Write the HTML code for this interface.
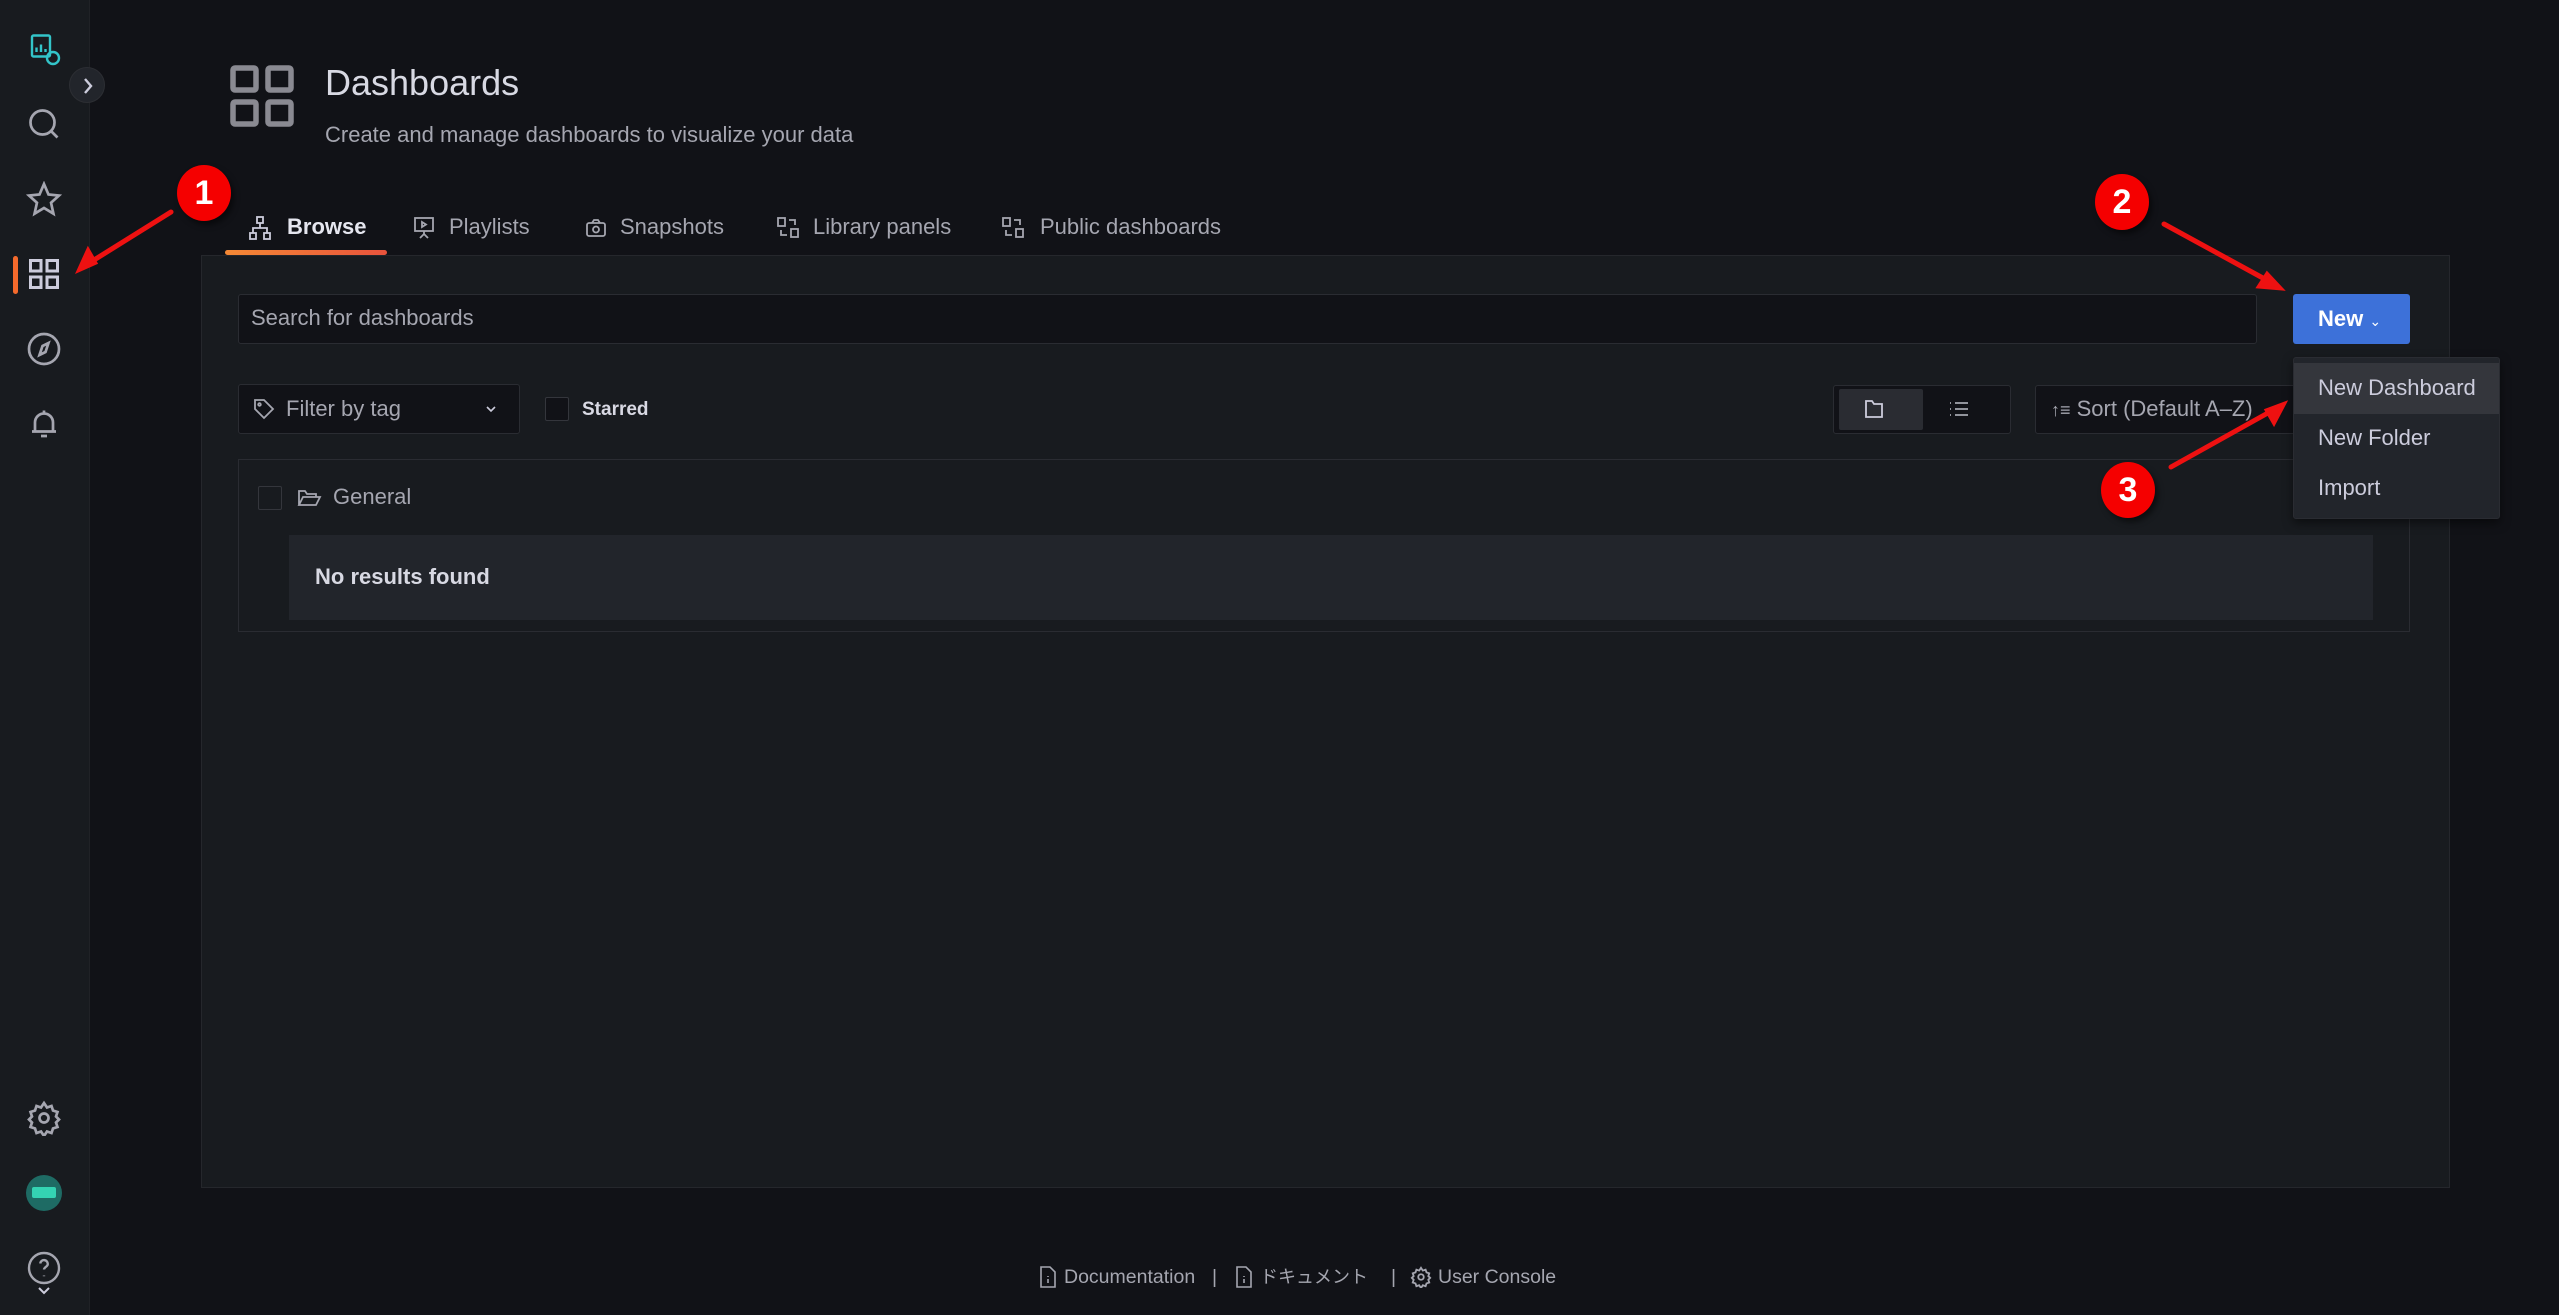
<!DOCTYPE html>
<html><head><meta charset="utf-8"><style>
*{box-sizing:border-box;margin:0;padding:0}
body{width:2559px;height:1315px;background:#111217;font-family:"Liberation Sans","Noto Sans CJK JP",sans-serif;color:#ccccdc;position:relative;overflow:hidden}
.a{position:absolute}
.side{left:0;top:0;width:90px;height:1315px;background:#181b1f;border-right:1px solid #202226}
.ic{position:absolute;left:26px;width:36px;height:36px}
svg{display:block}
.tab{position:absolute;top:212px;font-size:22px;color:#a5a6b0;line-height:30px}
.tabi{position:absolute;top:215px}
.panel{left:201px;top:255px;width:2249px;height:933px;background:#181b1f;border:1px solid #25272c}
.inp{background:#111217;border:1px solid #2a2c32;border-radius:3px}
.badge{width:54px;height:56px;border-radius:50%;background:#f50000;color:#fff;font-weight:bold;font-size:34px;text-align:center;line-height:56px;box-shadow:3px 4px 6px rgba(0,0,0,.5)}
.mi{position:absolute;left:24px;font-size:22px;color:#ccccdc}
.ft{position:absolute;top:0;line-height:24px}
</style></head><body>
<div class="a side">
 <svg class="ic" style="top:31px" viewBox="0 0 24 24" fill="none" stroke="#33c5c9" stroke-width="1.6"><rect x="4" y="3" width="12" height="14" rx="1"/><path d="M7 14v-3M10 14v-5M13 14v-2"/><circle cx="18" cy="18" r="4"/></svg>
 <svg class="ic" style="top:106px" viewBox="0 0 24 24" fill="none" stroke="#a5a6b0" stroke-width="1.8"><circle cx="11" cy="11" r="8"/><path d="M17 17l4 4"/></svg>
 <svg class="ic" style="top:181px" viewBox="0 0 24 24" fill="none" stroke="#a5a6b0" stroke-width="1.8"><path d="M12 2l3 7 7 .7-5.3 4.8 1.6 7.3L12 18l-6.3 3.8 1.6-7.3L2 9.7 9 9z"/></svg>
 <div class="a" style="left:13px;top:256px;width:5px;height:38px;background:#f46a2c;border-radius:3px"></div>
 <svg class="ic" style="top:256px" viewBox="0 0 24 24" fill="none" stroke="#ccccdc" stroke-width="2"><rect x="3" y="3" width="7" height="7"/><rect x="14" y="3" width="7" height="7"/><rect x="3" y="14" width="7" height="7"/><rect x="14" y="14" width="7" height="7"/></svg>
 <svg class="ic" style="top:331px" viewBox="0 0 24 24" fill="none" stroke="#a5a6b0" stroke-width="1.8"><circle cx="12" cy="12" r="10"/><path d="M15 8l-2 6-4 2 2-6z"/></svg>
 <svg class="ic" style="top:406px" viewBox="0 0 24 24" fill="none" stroke="#a5a6b0" stroke-width="1.8"><path d="M6 17V11a6 6 0 0112 0v6zM4 17h16M10 20h4M12 3v2"/></svg>
 <svg class="ic" style="top:1100px" viewBox="0 0 24 24" fill="none" stroke="#a5a6b0" stroke-width="1.8"><circle cx="12" cy="12" r="3"/><path d="M12 2l2 3 3-1 1 3 3 1-1 3 2 2-2 2 1 3-3 1-1 3-3-1-2 3-2-3-3 1-1-3-3-1 1-3-2-2 2-2-1-3 3-1 1-3 3 1z"/></svg>
 <div class="a" style="left:26px;top:1175px;width:36px;height:36px;border-radius:50%;background:#1e6b64"><div class="a" style="left:6px;top:12px;width:24px;height:11px;background:#34d3b3;border-radius:2px"></div></div>
 <svg class="ic" style="top:1250px" viewBox="0 0 24 24" fill="none" stroke="#a5a6b0" stroke-width="1.6"><circle cx="12" cy="12" r="10"/><path d="M9.5 9a2.5 2.5 0 115 .5c0 1.5-2.5 2-2.5 3.5M12 17v.5"/></svg>
 <svg class="a" style="left:36px;top:1285px" width="16" height="12" viewBox="0 0 16 12" fill="none" stroke="#ccccdc" stroke-width="2"><path d="M3 3l5 5 5-5"/></svg>
</div>
<div class="a" style="left:69px;top:67px;width:36px;height:36px;border-radius:50%;background:#22252b;border:1px solid #2c2e33"><svg class="a" style="left:11px;top:9px" width="14" height="18" viewBox="0 0 14 18" fill="none" stroke="#ccccdc" stroke-width="2.4"><path d="M4 2l6 7-6 7"/></svg></div>

<svg class="a" style="left:230px;top:65px" width="64" height="62" viewBox="0 0 64 62" fill="none" stroke="#8a8a92" stroke-width="5.5"><rect x="3" y="3" width="23" height="22" rx="2"/><rect x="38" y="3" width="23" height="22" rx="2"/><rect x="3" y="37" width="23" height="22" rx="2"/><rect x="38" y="37" width="23" height="22" rx="2"/></svg>
<div class="a" style="left:325px;top:62px;font-size:36px;color:#d8d9e3">Dashboards</div>
<div class="a" style="left:325px;top:122px;font-size:22px;color:#a5a6b0">Create and manage dashboards to visualize your data</div>

<svg class="tabi" style="left:248px" width="24" height="26" viewBox="0 0 24 26" fill="none" stroke="#ccccdc" stroke-width="1.8"><rect x="9" y="2" width="6" height="6"/><rect x="2" y="18" width="6" height="6"/><rect x="16" y="18" width="6" height="6"/><path d="M12 8v5M5 18v-5h14v5"/></svg>
<div class="tab" style="left:287px;color:#e5e6ef;font-weight:bold">Browse</div>
<div class="a" style="left:225px;top:250px;width:162px;height:5px;background:linear-gradient(90deg,#f58935,#e8533c);border-radius:3px"></div>
<svg class="tabi" style="left:412px" width="24" height="26" viewBox="0 0 24 26" fill="none" stroke="#a5a6b0" stroke-width="1.8"><rect x="3" y="3" width="18" height="13"/><path d="M10 7v5l4-2.5zM12 16v4M8 23l4-4 4 4"/></svg>
<div class="tab" style="left:449px">Playlists</div>
<svg class="tabi" style="left:584px" width="24" height="26" viewBox="0 0 24 26" fill="none" stroke="#a5a6b0" stroke-width="1.8"><rect x="3" y="8" width="18" height="13" rx="2"/><path d="M8 8l2-3h4l2 3"/><circle cx="12" cy="14.5" r="3"/></svg>
<div class="tab" style="left:620px">Snapshots</div>
<svg class="tabi" style="left:776px" width="24" height="26" viewBox="0 0 24 26" fill="none" stroke="#a5a6b0" stroke-width="1.8"><rect x="2" y="3" width="7" height="8"/><rect x="15" y="14" width="7" height="8"/><path d="M13 5h6v5M11 20H5v-5"/></svg>
<div class="tab" style="left:813px">Library panels</div>
<svg class="tabi" style="left:1001px" width="24" height="26" viewBox="0 0 24 26" fill="none" stroke="#a5a6b0" stroke-width="1.8"><rect x="2" y="3" width="7" height="8"/><rect x="15" y="14" width="7" height="8"/><path d="M13 5h6v5M11 20H5v-5"/></svg>
<div class="tab" style="left:1040px">Public dashboards</div>

<div class="a panel"></div>
<div class="a inp" style="left:238px;top:294px;width:2019px;height:50px"></div>
<div class="a" style="left:251px;top:305px;font-size:22px;color:#a5a6b0">Search for dashboards</div>
<div class="a" style="left:2293px;top:294px;width:117px;height:50px;background:#3d71d9;border-radius:3px;color:#fff;font-weight:bold;font-size:22px;line-height:50px;padding-left:25px">New <span style="font-size:14px;font-weight:normal">&#8964;</span></div>

<div class="a inp" style="left:238px;top:384px;width:282px;height:50px"></div>
<svg class="a" style="left:252px;top:397px" width="24" height="24" viewBox="0 0 24 24" fill="none" stroke="#a5a6b0" stroke-width="1.8"><path d="M3 3h9l9 9-9 9-9-9z"/><circle cx="7.5" cy="7.5" r="1.3"/></svg>
<div class="a" style="left:286px;top:396px;font-size:22px;color:#a5a6b0">Filter by tag</div>
<svg class="a" style="left:485px;top:404px" width="12" height="10" viewBox="0 0 12 10" fill="none" stroke="#ccccdc" stroke-width="1.6"><path d="M2 3l4 4 4-4"/></svg>
<div class="a inp" style="left:545px;top:397px;width:24px;height:24px;border-radius:2px;border-color:#34363c"></div>
<div class="a" style="left:582px;top:399px;font-size:19px;font-weight:bold;color:#d8d9e3">Starred</div>

<div class="a inp" style="left:1833px;top:385px;width:178px;height:49px"></div>
<div class="a" style="left:1839px;top:389px;width:84px;height:41px;background:#2a2c32;border-radius:2px"></div>
<svg class="a" style="left:1862px;top:397px" width="24" height="24" viewBox="0 0 24 24" fill="none" stroke="#ccccdc" stroke-width="1.8"><path d="M4 4h6l2 3h8v13H4z"/></svg>
<svg class="a" style="left:1948px;top:399px" width="22" height="20" viewBox="0 0 22 20" fill="none" stroke="#a5a6b0" stroke-width="1.8"><path d="M2 4h1M7 4h13M2 10h1M7 10h13M2 16h1M7 16h13"/></svg>
<div class="a inp" style="left:2035px;top:385px;width:270px;height:49px"></div>
<div class="a" style="left:2051px;top:396px;font-size:22px;color:#a5a6b0"><span style="font-size:18px">↑≡</span> Sort (Default A–Z)</div>

<div class="a" style="left:238px;top:459px;width:2172px;height:173px;border:1px solid #2a2c32"></div>
<div class="a inp" style="left:258px;top:486px;width:24px;height:24px;border-radius:2px;border-color:#34363c;background:#181b1f"></div>
<svg class="a" style="left:296px;top:486px" width="26" height="24" viewBox="0 0 26 24" fill="none" stroke="#a5a6b0" stroke-width="1.8"><path d="M3 19V5h6l2 3h9v3M3 19l4-8h17l-4 8z"/></svg>
<div class="a" style="left:333px;top:484px;font-size:22px;color:#a5a6b0">General</div>
<div class="a" style="left:289px;top:535px;width:2084px;height:85px;background:#22252b"></div>
<div class="a" style="left:315px;top:564px;font-size:22px;font-weight:bold;color:#d8d9e3">No results found</div>

<div class="a" style="left:2293px;top:357px;width:207px;height:162px;background:#22252b;border-radius:3px;box-shadow:0 4px 10px rgba(0,0,0,.5);border:1px solid #2a2c32">
 <div class="a" style="left:0;top:5px;width:205px;height:51px;background:#34363c"></div>
 <div class="mi" style="top:17px">New Dashboard</div>
 <div class="mi" style="top:67px">New Folder</div>
 <div class="mi" style="top:117px">Import</div>
</div>

<div class="a" style="left:0;top:1265px;width:2559px;font-size:19.5px;color:#a5a6b0">
 <svg class="a" style="left:1038px;top:0" width="20" height="24" viewBox="0 0 20 24" fill="none" stroke="#a5a6b0" stroke-width="1.6"><path d="M3 2h9l5 5v15H3zM10 11v1M10 14v4"/></svg>
 <div class="ft" style="left:1064px">Documentation</div>
 <div class="ft" style="left:1212px">|</div>
 <svg class="a" style="left:1234px;top:0" width="20" height="24" viewBox="0 0 20 24" fill="none" stroke="#a5a6b0" stroke-width="1.6"><path d="M3 2h9l5 5v15H3zM10 11v1M10 14v4"/></svg>
 <div class="ft" style="left:1260px;font-size:18px">ドキュメント</div>
 <div class="ft" style="left:1391px">|</div>
 <svg class="a" style="left:1410px;top:1px" width="22" height="22" viewBox="0 0 24 24" fill="none" stroke="#a5a6b0" stroke-width="2"><circle cx="12" cy="12" r="3"/><path d="M12 2l2 3 3-1 1 3 3 1-1 3 2 2-2 2 1 3-3 1-1 3-3-1-2 3-2-3-3 1-1-3-3-1 1-3-2-2 2-2-1-3 3-1 1-3 3 1z"/></svg>
 <div class="ft" style="left:1438px">User Console</div>
</div>

<svg class="a" style="left:0;top:0" width="2559" height="1315" fill="none" stroke="#ee1111" stroke-width="5" stroke-linecap="round">
 <path d="M171 212L86 265"/><path d="M78 271l10-22 8 14z" fill="#ee1111" stroke-width="3"/>
 <path d="M2164 224L2272 283"/><path d="M2282 289l-24-2 9-14z" fill="#ee1111" stroke-width="3"/>
 <path d="M2171 467L2275 409"/><path d="M2285 403l-11 21-8-14z" fill="#ee1111" stroke-width="3"/>
</svg>
<div class="a badge" style="left:177px;top:165px">1</div>
<div class="a badge" style="left:2095px;top:174px">2</div>
<div class="a badge" style="left:2101px;top:462px">3</div>
</body></html>
